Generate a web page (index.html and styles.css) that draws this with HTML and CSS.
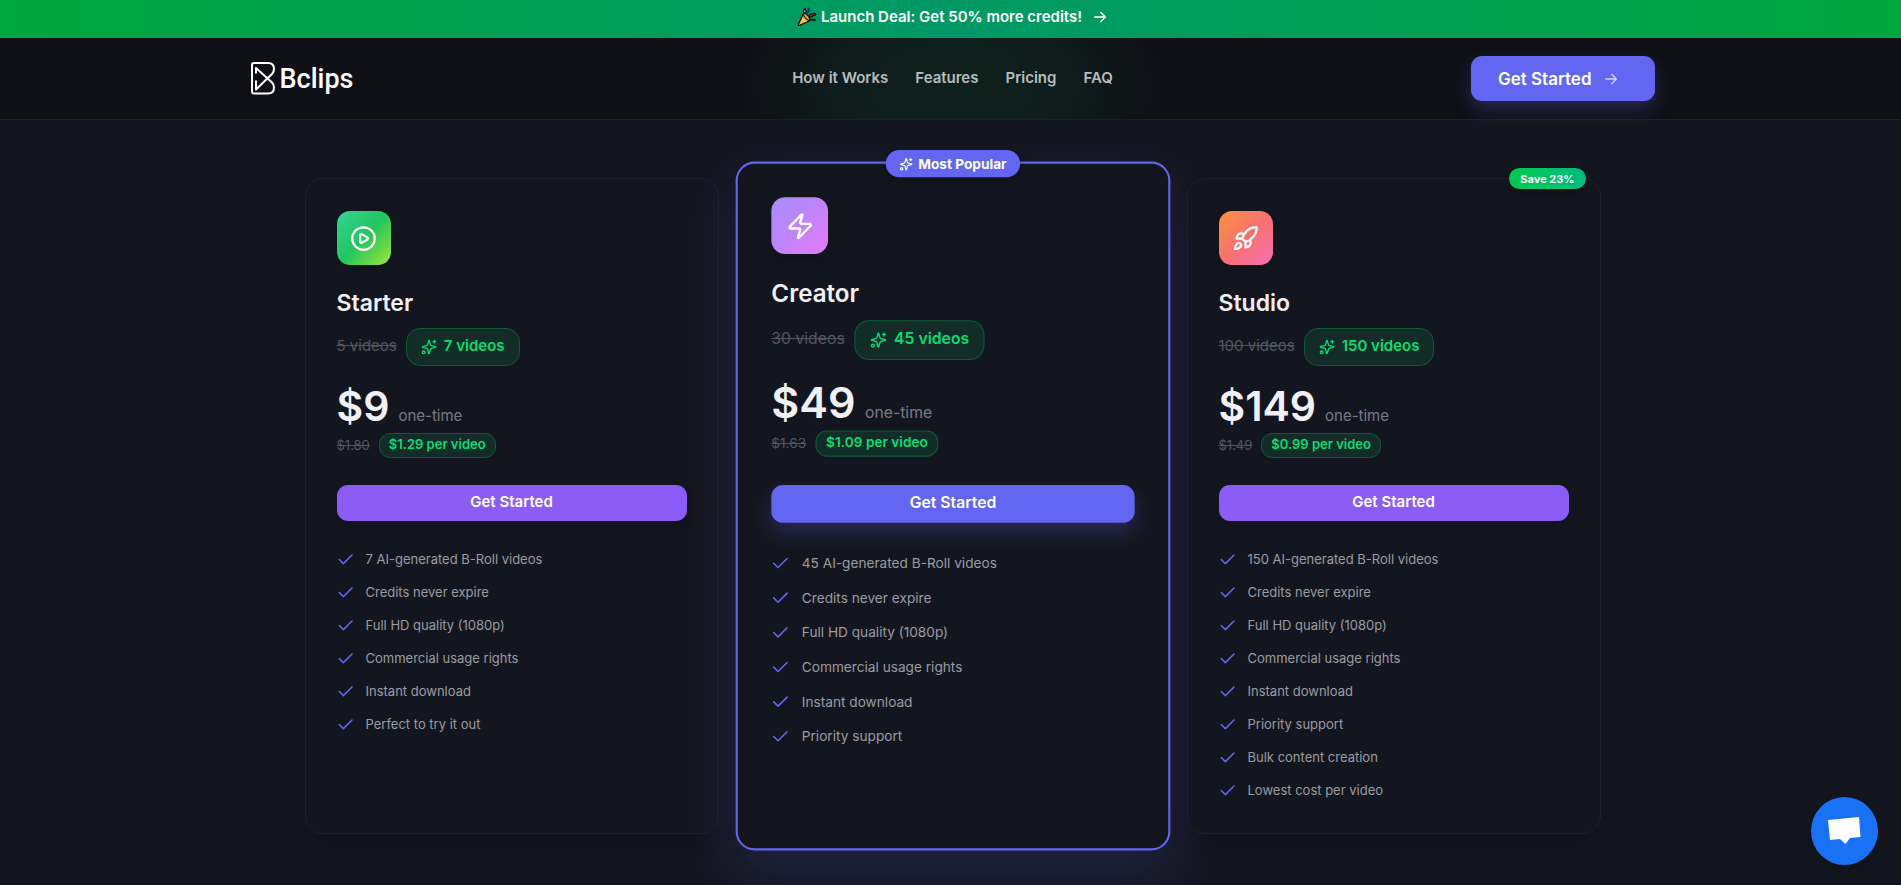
FILE: index.html
```html
<!DOCTYPE html>
<html lang="en">
<head>
<meta charset="utf-8">
<meta name="viewport" content="width=device-width, initial-scale=1">
<title>Bclips Pricing</title>
<link rel="stylesheet" href="styles.css">
</head>
<body>
<svg class="sprite" aria-hidden="true">
  <symbol id="arrow" viewBox="0 0 24 24"><path d="M4 12h16M13 5l7 7-7 7"/></symbol>
  <symbol id="tick" viewBox="0 0 24 24"><path d="M3 14l5.500 5.500L20 8"/></symbol>
  <symbol id="sparkles" viewBox="0 0 24 24"><path d="M9.937 15.5A2 2 0 0 0 8.5 14.063l-6.135-1.582a.5.5 0 0 1 0-.962L8.500 9.936A2 2 0 0 0 9.937 8.500l1.582-6.135a.5.5 0 0 1 .963 0L14.063 8.500A2 2 0 0 0 15.500 9.937l6.135 1.581a.5.5 0 0 1 0 .964L15.500 14.063a2 2 0 0 0-1.437 1.437l-1.582 6.135a.5.5 0 0 1-.963 0z"/><path d="M20 2v4M22 4h-4"/><circle cx="4" cy="20" r="2"/></symbol>
</svg>
<div class="page">
  <a class="banner" href="#pricing">
    <svg class="popper" viewBox="0 0 20 20" aria-hidden="true">
      <path d="M6.500 6.500L1.500 17.200q-.5 1.600 1.200 1.100L13 13.500z" fill="#fcc23c" stroke="#111" stroke-width="1.300"/>
      <path d="M6.500 6.500q1.200-1 4 1.700t2.500 5.300q-2 .3-4.400-2.200T6.500 6.500z" fill="#f7a823" stroke="#111" stroke-width="1.200"/>
      <path d="M7 5.500Q5.500 3 8 1.500q1.800 2 .8 5z" fill="#3fa9f5" stroke="#111" stroke-width="1.200"/>
      <path d="M10.500 8Q10 5 12 3.500 10.800 1.800 12.200 1" fill="none" stroke="#153a6b" stroke-width="1.900"/>
      <path d="M12 9.500q1-3.300 3.500-2.500 2.200-1.500 3.300.3-1 2-3 1.300-1.300 2.200-3.800.9z" fill="#c62f1f" stroke="#111" stroke-width="1.200"/>
      <path d="M14 12.500q2.500-1.200 4.800.5-2 1.800-4.800-.5z" fill="#8e2015" stroke="#111" stroke-width="1"/>
    </svg>
    <span>Launch Deal: Get 50% more credits!</span>
    <svg class="icon banner-arrow" aria-hidden="true"><use href="#arrow"/></svg>
  </a>

  <header class="header">
    <div class="header-inner">
      <a class="logo" href="#">
        <svg class="logo-mark" viewBox="0 0 25 33" aria-hidden="true">
          <path d="M1 3q0-2 2-2h14q6 0 6 6 0 3-2 5L5 27.500V18.500M1 3v26q0 2.500 2 2.500h14q6 0 6-6 0-3-2-5L5 6v5.500"/>
        </svg>
        <span>Bclips</span>
      </a>
      <nav class="nav">
        <a href="#how">How it Works</a>
        <a href="#features">Features</a>
        <a href="#pricing">Pricing</a>
        <a href="#faq">FAQ</a>
      </nav>
      <a class="cta" href="#start">Get Started <svg class="icon" aria-hidden="true"><use href="#arrow"/></svg></a>
    </div>
  </header>

  <main class="plans" id="pricing">
    <section class="card">
      <div class="tile tile-green">
        <svg class="icon" viewBox="0 0 24 24"><circle cx="12" cy="12" r="10"/><path d="M9 9.003a1 1 0 0 1 1.517-.859l4.997 2.997a1 1 0 0 1 0 1.718l-4.997 2.997A1 1 0 0 1 9 14.996z"/></svg>
      </div>
      <h2>Starter</h2>
      <div class="videos"><s>5 videos</s><span class="pill"><svg class="icon"><use href="#sparkles"/></svg><span>7 videos</span></span></div>
      <div class="price"><strong>$9</strong><span>one-time</span></div>
      <div class="unit"><s>$1.80</s><span class="chip">$1.29 per video</span></div>
      <button class="buy" type="button">Get Started</button>
      <ul>
        <li><svg class="icon"><use href="#tick"/></svg>7 AI-generated B-Roll videos</li>
        <li><svg class="icon"><use href="#tick"/></svg>Credits never expire</li>
        <li><svg class="icon"><use href="#tick"/></svg>Full HD quality (1080p)</li>
        <li><svg class="icon"><use href="#tick"/></svg>Commercial usage rights</li>
        <li><svg class="icon"><use href="#tick"/></svg>Instant download</li>
        <li><svg class="icon"><use href="#tick"/></svg>Perfect to try it out</li>
      </ul>
    </section>

    <section class="card card-popular">
      <div class="popular"><svg class="icon"><use href="#sparkles"/></svg>Most Popular</div>
      <div class="tile tile-purple">
        <svg class="icon" viewBox="0 0 24 24"><path d="M4 14a1 1 0 0 1-.78-1.630l9.900-10.200a.5.5 0 0 1 .86.460l-1.920 6.020A1 1 0 0 0 13 10h7a1 1 0 0 1 .78 1.630l-9.900 10.200a.5.5 0 0 1-.86-.460l1.920-6.020A1 1 0 0 0 11 14z"/></svg>
      </div>
      <h2>Creator</h2>
      <div class="videos"><s>30 videos</s><span class="pill"><svg class="icon"><use href="#sparkles"/></svg><span>45 videos</span></span></div>
      <div class="price"><strong>$49</strong><span>one-time</span></div>
      <div class="unit"><s>$1.63</s><span class="chip">$1.09 per video</span></div>
      <button class="buy" type="button">Get Started</button>
      <ul>
        <li><svg class="icon"><use href="#tick"/></svg>45 AI-generated B-Roll videos</li>
        <li><svg class="icon"><use href="#tick"/></svg>Credits never expire</li>
        <li><svg class="icon"><use href="#tick"/></svg>Full HD quality (1080p)</li>
        <li><svg class="icon"><use href="#tick"/></svg>Commercial usage rights</li>
        <li><svg class="icon"><use href="#tick"/></svg>Instant download</li>
        <li><svg class="icon"><use href="#tick"/></svg>Priority support</li>
      </ul>
    </section>

    <section class="card">
      <div class="save">Save 23%</div>
      <div class="tile tile-orange">
        <svg class="icon" viewBox="0 0 24 24"><path d="M4.500 16.500c-1.500 1.260-2 5-2 5s3.740-.5 5-2c.71-.84.7-2.130-.09-2.910a2.180 2.180 0 0 0-2.910-.09zM12 15l-3-3a22 22 0 0 1 2-3.950A12.880 12.880 0 0 1 22 2c0 2.720-.78 7.500-6 11a22.350 22.350 0 0 1-4 2zM9 12H4s.55-3.030 2-4c1.620-1.080 5 0 5 0M12 15v5s3.030-.55 4-2c1.080-1.620 0-5 0-5"/></svg>
      </div>
      <h2>Studio</h2>
      <div class="videos"><s>100 videos</s><span class="pill"><svg class="icon"><use href="#sparkles"/></svg><span>150 videos</span></span></div>
      <div class="price"><strong>$149</strong><span>one-time</span></div>
      <div class="unit"><s>$1.49</s><span class="chip">$0.99 per video</span></div>
      <button class="buy" type="button">Get Started</button>
      <ul>
        <li><svg class="icon"><use href="#tick"/></svg>150 AI-generated B-Roll videos</li>
        <li><svg class="icon"><use href="#tick"/></svg>Credits never expire</li>
        <li><svg class="icon"><use href="#tick"/></svg>Full HD quality (1080p)</li>
        <li><svg class="icon"><use href="#tick"/></svg>Commercial usage rights</li>
        <li><svg class="icon"><use href="#tick"/></svg>Instant download</li>
        <li><svg class="icon"><use href="#tick"/></svg>Priority support</li>
        <li><svg class="icon"><use href="#tick"/></svg>Bulk content creation</li>
        <li><svg class="icon"><use href="#tick"/></svg>Lowest cost per video</li>
      </ul>
    </section>
  </main>
</div>
<button class="chat" type="button" aria-label="Open chat">
  <svg viewBox="0 0 34 30" aria-hidden="true"><path d="M0 4L31 1l1.500 20L22 22l-4.500 6L12 23 2 24z"/></svg>
</button>
</body>
</html>
```
FILE: styles.css
```css
* { box-sizing: border-box; }

body {
  margin: 0;
  background: #14161f;
  color: #f1f0f5;
  font-family: Inter, "Liberation Sans", sans-serif;
  font-size: 15px;
  line-height: 24px;
  overflow-x: hidden;
}

a { color: inherit; text-decoration: none; }

.sprite { display: none; }

.icon {
  flex: none;
  width: 16px;
  height: 16px;
  fill: none;
  stroke: currentColor;
  stroke-width: 2;
  stroke-linecap: round;
  stroke-linejoin: round;
}

/* The page runs slightly past the right edge of the window. */
.page {
  width: calc(100% + 4px);
  min-height: 100vh;
}

.banner {
  display: flex;
  justify-content: center;
  align-items: center;
  height: 38px;
  padding-bottom: 5px;
  background: linear-gradient(90deg, #00a63e, #009966 50%, #00a63e);
  color: #fff;
  font-weight: 600;
}

.popper { width: 20px; height: 20px; margin-right: 4px; }
.banner-arrow { margin-left: 10px; }

.header {
  border-bottom: 1px solid #1d1f27;
  background:
    radial-gradient(ellipse 210px 120px at 50% 60%, rgba(0, 201, 110, .09), rgba(0, 201, 110, .07) 55%, transparent),
    #0f1015;
}

.header-inner {
  display: grid;
  grid-template-columns: 1fr auto 1fr;
  align-items: center;
  max-width: 1440px;
  margin: 0 auto;
  padding: 18px;
}

.logo {
  display: flex;
  align-items: center;
  gap: 4px;
  color: #fff;
  font: 500 27px/32px Roboto, sans-serif;
}

.logo-mark {
  width: 25px;
  height: 33px;
  fill: none;
  stroke: #fff;
  stroke-width: 2;
  stroke-linejoin: round;
}

.nav {
  display: flex;
  gap: 27px;
  padding-bottom: 2px;
  color: #b9bcbe;
  font-weight: 600;
}

.cta {
  display: flex;
  align-items: center;
  justify-self: end;
  gap: 11px;
  height: 45px;
  padding: 0 36px 0 27px;
  border-radius: 11px;
  background: #6366f1;
  box-shadow: 0 9px 18px rgba(99, 102, 241, .25);
  color: #fff;
  font-size: 17px;
  font-weight: 600;
}

.cta .icon { stroke-opacity: .7; }

.plans {
  display: grid;
  grid-template-columns: repeat(3, 1fr);
  gap: 27px;
  max-width: 1296px;
  margin: 0 auto;
  padding: 58px 0 48px;
}

.card {
  position: relative;
  padding: 32px 31px;
  border: 1px solid #1e202a;
  border-radius: 18px;
  background: #14161f;
  box-shadow: 0 9px 18px rgba(0, 0, 0, .1);
}

.card-popular {
  padding: 32px;
  border: 2px solid #6366f1;
  box-shadow: 0 24px 54px rgba(99, 102, 241, .16);
  transform: scale(1.05);
}

.popular,
.save {
  position: absolute;
  display: flex;
  align-items: center;
  color: #fff;
  font-weight: 700;
}

.popular {
  top: -13px;
  left: 50%;
  gap: 5px;
  height: 26px;
  padding: 0 13px;
  border-radius: 13px;
  background: #6366f1;
  box-shadow: 0 4px 8px rgba(0, 0, 0, .2);
  font-size: 13px;
  white-space: nowrap;
  transform: translateX(-50%);
}

.popular .icon { width: 13px; height: 13px; }

.save {
  top: -11px;
  right: 14px;
  height: 21px;
  padding: 0 11px;
  border-radius: 11px;
  background: linear-gradient(90deg, #00c950, #00bc7d);
  box-shadow: 0 4px 8px rgba(0, 0, 0, .2);
  font-size: 11px;
}

.tile {
  display: flex;
  align-items: center;
  justify-content: center;
  width: 54px;
  height: 54px;
  border-radius: 13px;
  box-shadow: 0 4px 8px rgba(0, 0, 0, .15);
  color: #fff;
}

.tile .icon { width: 27px; height: 27px; }
.tile-green { background: linear-gradient(135deg, #34d399, #22c55e 50%, #a3e635); }
.tile-purple { background: linear-gradient(135deg, #a78bfa, #c084fc 50%, #e879f9); }
.tile-orange { background: linear-gradient(135deg, #fb923c, #f87171 50%, #f472b6); }

h2 {
  margin: 22px 0 9px;
  font-size: 23px;
  font-weight: 600;
  line-height: 32px;
}

s { color: #54565e; }

.videos {
  display: flex;
  gap: 9px;
}

.videos s { padding-top: 6px; }

.pill {
  display: flex;
  align-items: center;
  gap: 7px;
  height: 38px;
  padding: 0 14px;
  border: 1px solid #0d5a33;
  border-radius: 14px;
  background: #122d28;
  color: #05df72;
  font-weight: 600;
}

.pill > span { padding-bottom: 2px; }

.price {
  display: flex;
  align-items: baseline;
  gap: 9px;
  margin-top: 18px;
  line-height: 45px;
}

.price strong { font-size: 41px; font-weight: 600; }
.price span { color: #797b84; line-height: 22px; }

.unit {
  display: flex;
  align-items: center;
  gap: 9px;
  margin-top: 4px;
  font-size: 13px;
  line-height: 21px;
}

.chip {
  height: 25px;
  padding: 0 9px;
  border: 1px solid #0d5a33;
  border-radius: 11px;
  background: #122d28;
  color: #05df72;
  font-weight: 600;
}

.buy {
  display: block;
  width: 100%;
  height: 36px;
  margin-top: 27px;
  padding: 0 0 3px;
  border: 0;
  border-radius: 11px;
  background: #8b5cf6;
  box-shadow: 0 4px 8px rgba(0, 0, 0, .15);
  color: #fff;
  font: inherit;
  font-weight: 600;
}

.card-popular .buy {
  background: #6366f1;
  box-shadow: 0 9px 18px rgba(99, 102, 241, .25);
}

ul {
  display: grid;
  gap: 12px;
  margin: 28px 0 0;
  padding: 0;
  color: #9b9ca3;
  font-size: 13px;
  line-height: 21px;
  list-style: none;
}

li { display: flex; gap: 11px; }

li .icon {
  width: 18px;
  height: 18px;
  color: #6366f1;
}

.chat {
  position: fixed;
  right: 23px;
  bottom: 20px;
  display: flex;
  align-items: center;
  justify-content: center;
  width: 67px;
  height: 68px;
  padding: 0;
  border: 0;
  border-radius: 50%;
  background: #1972f5;
  box-shadow: 0 2px 9px rgba(0, 0, 0, .25);
}

.chat svg { width: 34px; height: 30px; fill: #fff; }
```
